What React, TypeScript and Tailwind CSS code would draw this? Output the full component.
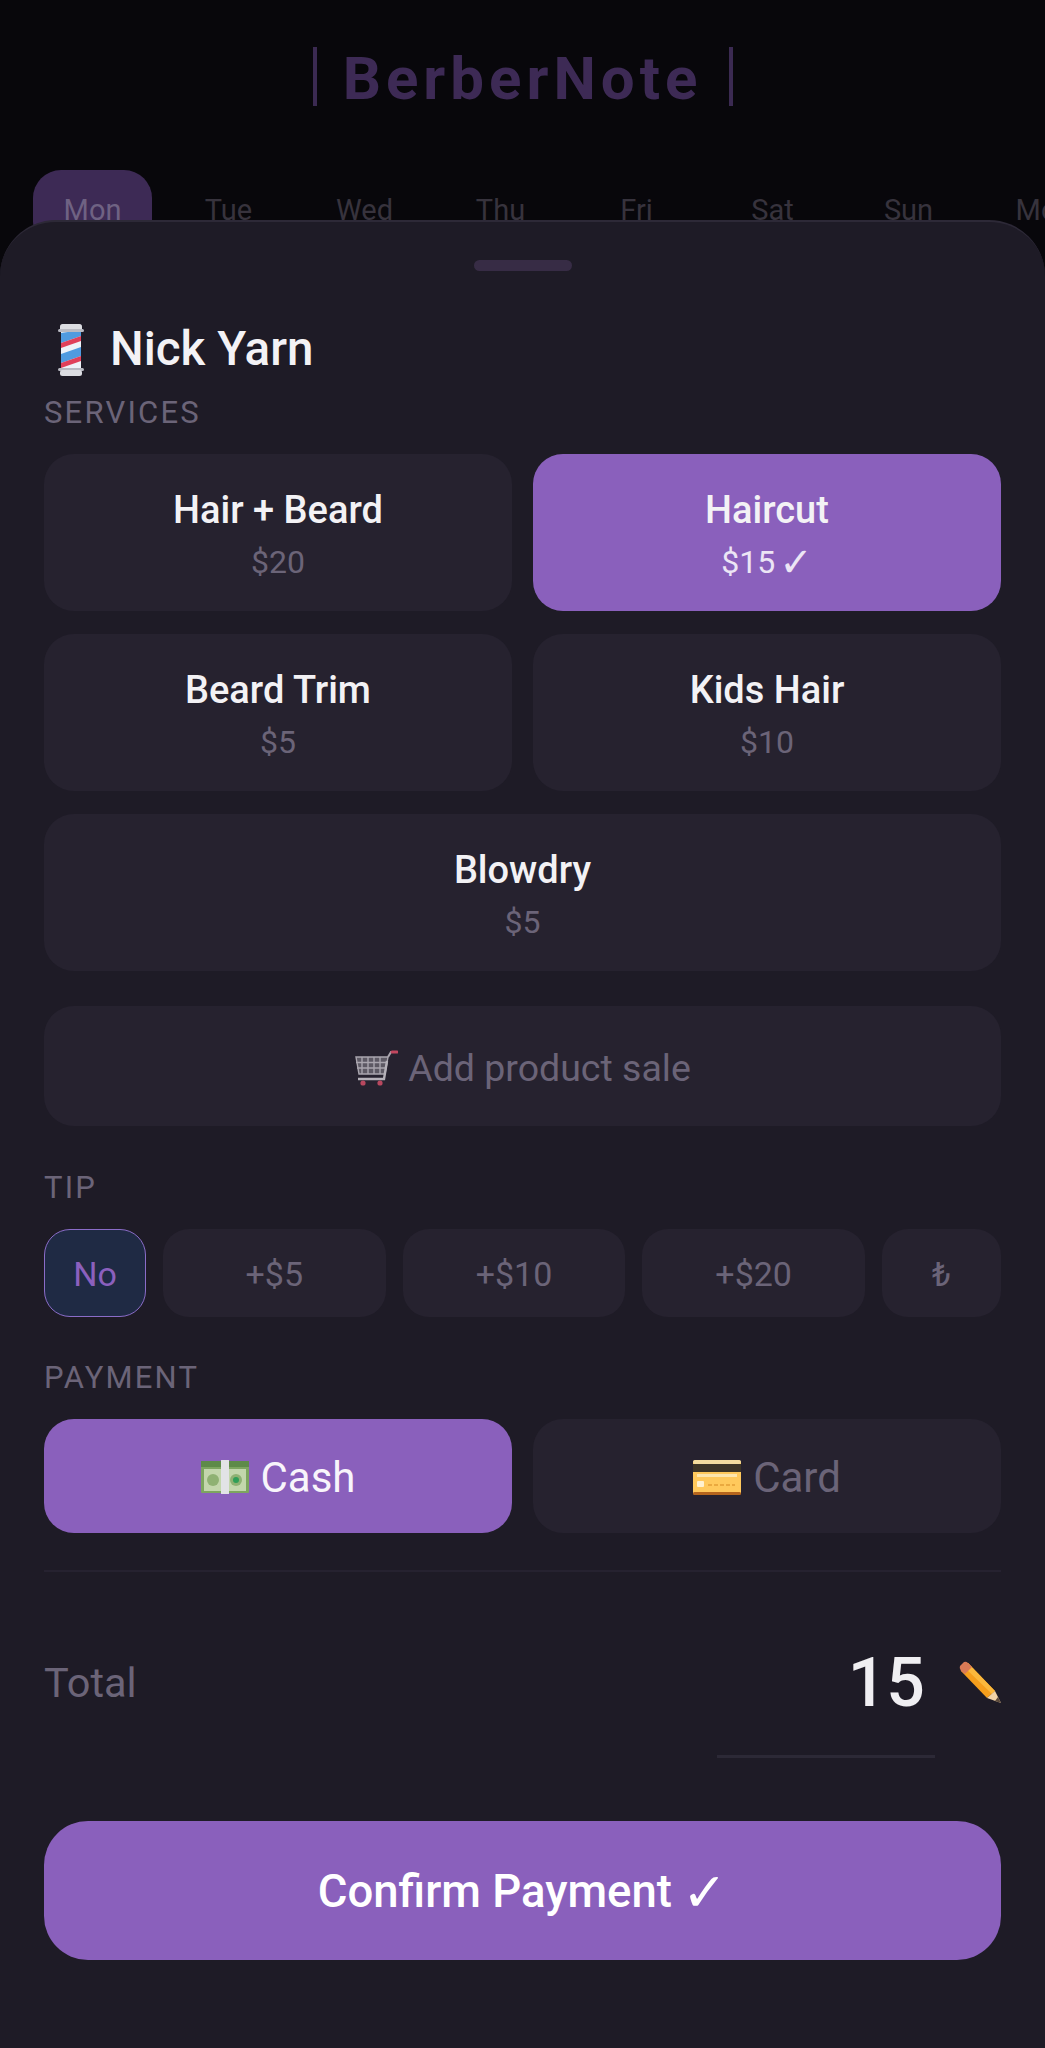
import React from 'react';

const days = ['Mon', 'Tue', 'Wed', 'Thu', 'Fri', 'Sat', 'Sun', 'Mon'];

const PoleIcon = () => (
  <svg width="30" height="54" viewBox="0 0 30 54" className="shrink-0">
    <rect x="5" y="7" width="20" height="40" fill="#eef2f8" />
    <g fill="#4f9be0">
      <path d="M5 10 L25 7 V13 L5 20 Z" />
      <path d="M5 31 L25 24 V33 L5 40 Z" />
    </g>
    <g fill="#e0405a">
      <path d="M5 20 L25 13 V18 L5 25 Z" />
      <path d="M5 40 L25 33 V38 L5 45 Z" />
    </g>
    <rect x="4" y="1" width="22" height="7" rx="2.5" fill="#dcdde2" />
    <rect x="2" y="6" width="26" height="3" rx="1.5" fill="#b9bac2" />
    <rect x="2" y="45" width="26" height="3" rx="1.5" fill="#b9bac2" />
    <rect x="4" y="47" width="22" height="6" rx="2.5" fill="#dcdde2" />
  </svg>
);

const CartIcon = () => (
  <svg width="44" height="38" viewBox="0 0 44 38" className="shrink-0">
    <g stroke="#a9a5ae" strokeWidth="1.4" fill="none">
      <path d="M2 8 H34 L31 25 H5 Z" fill="#5d5964" />
      <path d="M2 13.5 H33 M3 19 H32 M8 8 V25 M14 8 V25 M20 8 V25 M26 8 V25" />
    </g>
    <path d="M34 8 L37 3 H42" stroke="#a9a5ae" strokeWidth="2" fill="none" />
    <path d="M38 3 H43" stroke="#c2475f" strokeWidth="3" strokeLinecap="round" />
    <path d="M33 12 L30 30 H4" stroke="#b5b1b9" strokeWidth="2.4" fill="none" />
    <circle cx="9" cy="34" r="2.6" fill="#b8485f" />
    <circle cx="26" cy="34" r="2.6" fill="#b8485f" />
  </svg>
);

const MoneyIcon = () => (
  <svg width="48" height="34" viewBox="0 0 48 34" className="shrink-0">
    <rect x="0" y="1" width="48" height="32" rx="1" fill="#7da55f" />
    <rect x="0" y="1" width="48" height="6" fill="#5e8a48" />
    <rect x="3" y="9" width="42" height="22" fill="#c3d6ac" />
    <circle cx="12" cy="20" r="6" fill="#8fb173" />
    <circle cx="35" cy="20" r="6" fill="#8fb173" />
    <circle cx="35" cy="20" r="3" fill="#2f9e57" />
    <rect x="20" y="0" width="8" height="34" fill="#e2e3e6" />
  </svg>
);

const CardIcon = () => (
  <svg width="48" height="35" viewBox="0 0 48 35" className="shrink-0">
    <rect x="0" y="0" width="48" height="35" rx="3" fill="#ffc95c" />
    <rect x="0" y="4" width="48" height="8" fill="#3d3527" />
    <rect x="0" y="0" width="48" height="4" rx="2" fill="#f4dc9f" />
    <rect x="4" y="14" width="40" height="3" fill="#fde6ae" />
    <rect x="4" y="21" width="7" height="6" rx="1" fill="#fff1cf" />
    <path d="M15 25 H42" stroke="#eaa93f" strokeWidth="2" strokeDasharray="4 2" />
    <rect x="0" y="32" width="48" height="3" rx="1.5" fill="#b5651d" />
  </svg>
);

const PencilIcon = () => (
  <svg width="44" height="44" viewBox="-2 0 44 44" className="shrink-0">
    <path d="M9 2 L36 30 L28 37 L2 10 Z" fill="#f59e1c" />
    <path d="M9 2 L36 30 L33 33 L5 6 Z" fill="#fbb83c" />
    <path d="M5 1 Q7 0 9 2 L13 6 L6 13 L2 10 Q0 7 1 5 Z" fill="#d97a56" />
    <path d="M36 30 L42 42 L28 37 Z" fill="#f2d3a6" />
    <path d="M39 36 L42 42 L36 40 Z" fill="#5b4a3c" />
  </svg>
);

const Check = ({ className = '' }: { className?: string }) => (
  <span className={`font-['DejaVu_Sans',sans-serif] leading-none ${className}`}>✓</span>
);

const Service = ({ name, price, active, className = '' }: { name: string; price: string; active?: boolean; className?: string }) => (
  <div className={`h-[157px] pt-[4px] rounded-[30px] flex flex-col items-center justify-center ${active ? 'bg-[#8a60bc]' : 'bg-[#26222f]'} ${className}`}>
    <div className="text-[38px] leading-[46px] font-medium text-[#f3f2f5]">{name}</div>
    <div className={`flex items-center gap-[4px] h-[40px] text-[32px] leading-[40px] mt-[9px] ${active ? 'text-[#ece5f5]' : 'text-[#6b6478]'}`}>
      {price}
      {active && <Check className="text-[40px]" />}
    </div>
  </div>
);

const SectionLabel = ({ children, className = '' }: { children: React.ReactNode; className?: string }) => (
  <div className={`text-[31px] leading-[36px] tracking-[2.2px] text-[#6b6478] ${className}`}>{children}</div>
);

const Tip = ({ children, className = '' }: { children: React.ReactNode; className?: string }) => (
  <div className={`h-[88px] pt-[2px] rounded-[26px] flex items-center justify-center text-[34px] text-[#6b6478] bg-[#26222f] ${className}`}>{children}</div>
);

export default function App() {
  return (
    <div className="relative h-[2048px] w-[1045px] overflow-hidden bg-[#08070b] font-['Roboto',sans-serif]">
      {/* Page behind the sheet */}
      <div className="pt-[47px] flex justify-center">
        <div className="h-[59px] pt-[4px] w-[420px] flex items-center justify-center border-x-[4px] border-[#3b2a52]">
          <span className="text-[60px] leading-none font-bold tracking-[5px] text-[#3d2a55]">BerberNote</span>
        </div>
      </div>
      <div className="mt-[64px] pl-[33px] flex gap-[17px]">
        {days.map((d, i) => (
          <div
            key={i}
            className={`w-[119px] h-[80px] shrink-0 rounded-[28px] pt-[20px] text-center text-[29px] leading-[40px] ${i === 0 ? 'bg-[#3d2a55] text-[#6f6283]' : 'text-[#37333d]'}`}
          >
            {d}
          </div>
        ))}
      </div>

      {/* Bottom sheet */}
      <div className="absolute inset-x-0 top-[220px] bottom-0 rounded-t-[56px] border-t-2 border-[#2d2937] bg-[#1e1b26] px-[44px]">
        <div className="mx-auto mt-[38px] h-[11px] w-[98px] rounded-full bg-[#372c45]" />

        <div className="mt-[52px] h-[54px] flex items-center">
          <div className="ml-[12px]"><PoleIcon /></div>
          <span className="ml-[24px] text-[47.5px] leading-none font-medium text-[#f3f2f5]">Nick Yarn</span>
        </div>
        <SectionLabel className="mt-[18px]">SERVICES</SectionLabel>

        <div className="mt-[23px] grid grid-cols-2 gap-x-[21px] gap-y-[23px]">
          <Service name="Hair + Beard" price="$20" />
          <Service name="Haircut" price="$15" active />
          <Service name="Beard Trim" price="$5" />
          <Service name="Kids Hair" price="$10" />
          <Service name="Blowdry" price="$5" className="col-span-2" />
        </div>

        <div className="mt-[35px] h-[120px] pt-[4px] rounded-[30px] bg-[#26222f] flex items-center justify-center gap-[10px] text-[37.5px] text-[#6b6478]">
          <CartIcon />
          <span>Add product sale</span>
        </div>

        <SectionLabel className="mt-[44px]">TIP</SectionLabel>
        <div className="mt-[23px] flex gap-[17px]">
          <Tip className="w-[102px] !bg-[#1f2a44] border border-[#8a6cc8] !text-[#8b60bd]">No</Tip>
          <Tip className="flex-1">+$5</Tip>
          <Tip className="flex-1">+$10</Tip>
          <Tip className="flex-1">+$20</Tip>
          <Tip className="w-[119px]">₺</Tip>
        </div>

        <SectionLabel className="mt-[43px]">PAYMENT</SectionLabel>
        <div className="mt-[23px] grid grid-cols-2 gap-x-[21px]">
          <div className="h-[114px] pt-[2px] rounded-[30px] bg-[#8a60bc] flex items-center justify-center gap-[12px] text-[42px] text-[#f8f5fb]">
            <MoneyIcon />
            <span>Cash</span>
          </div>
          <div className="h-[114px] pt-[2px] rounded-[30px] bg-[#26222f] flex items-center justify-center gap-[12px] text-[42px] text-[#6b6478]">
            <CardIcon />
            <span>Card</span>
          </div>
        </div>

        <div className="mt-[37px] h-[2px] bg-[#262230]" />

        <div className="mt-[60px] h-[126px] flex justify-between">
          <span className="mt-[27px] text-[41.5px] leading-[48px] text-[#6b6478]">Total</span>
          <div className="flex gap-[22px]">
            <div className="w-[218px] h-[126px] border-b-[3px] border-[#2c2936] pr-[10px] pt-[11px] text-right text-[68px] leading-[80px] font-medium text-[#f0eff2]">
              15
            </div>
            <div className="pt-[29px]"><PencilIcon /></div>
          </div>
        </div>

        <div className="mt-[63px] h-[139px] pt-[4px] rounded-[44px] bg-[#8a60bc] flex items-center justify-center gap-[10px] text-[45.5px] font-medium text-white">
          <span>Confirm Payment</span>
          <Check className="text-[54px]" />
        </div>
      </div>
    </div>
  );
}
